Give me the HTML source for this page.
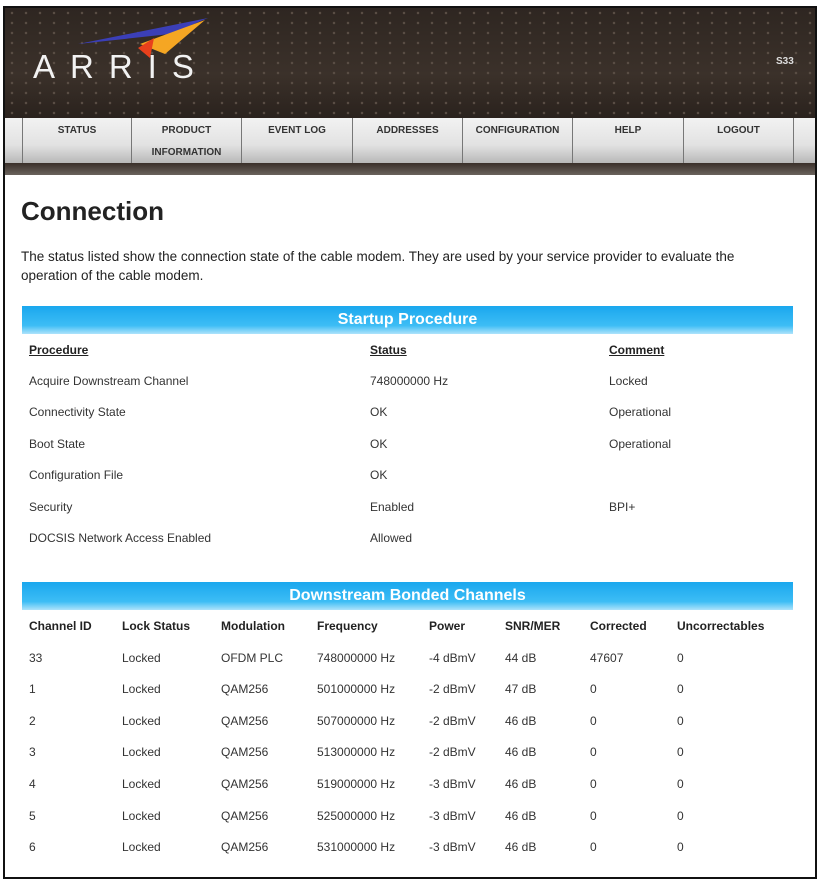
<!DOCTYPE html>
<html><head><style>
body{margin:0;width:821px;height:882px;background:#fff;position:relative;font-family:"Liberation Sans",sans-serif;overflow:hidden}
.frame{position:absolute;left:3px;top:6px;width:810px;height:869px;border:2px solid #111;}
.hdr{position:absolute;left:5px;top:8px;width:810px;height:110px;
background-image:radial-gradient(circle,#5a4e45 1px,transparent 1.5px),linear-gradient(#2e2621,#3b312a 60%,#2a221d);background-size:14px 10px,100% 100%;}
.nav{position:absolute;left:5px;top:118px;width:810px;height:45px;background:linear-gradient(#f2f2f2,#e2e2e2 60%,#b8b8b8);}
.strip{position:absolute;left:5px;top:163px;width:810px;height:12px;background:linear-gradient(#3a302a,#6a625c);}
.nb{position:absolute;top:118px;height:45px;border-left:1px solid #777;font-size:10px;font-weight:bold;color:#333;text-align:center;line-height:11px;padding-top:7px;box-sizing:border-box}
.t{position:absolute;font-size:12px;color:#333;white-space:nowrap}
.b{font-weight:bold;color:#222}
.u{text-decoration:underline}
.bar{position:absolute;left:22px;width:771px;height:28px;background:linear-gradient(#1aa7ee,#3dbdf5 70%,#aee3fb);color:#fff;font-weight:bold;font-size:16px;text-align:center;line-height:28px}
</style></head><body>
<div class="hdr"></div>
<svg style="position:absolute;left:70px;top:14px" width="150" height="50"><path d="M8 30 L138 4 L100 20 Z" fill="#3b3fb8"/><path d="M70 30 L135 6 L95 40 Z" fill="#f5a623"/><path d="M68 34 L84 24 L80 44 Z" fill="#e8401c"/></svg>
<div style="position:absolute;left:33px;top:48px;color:#f2f2f2;font-size:33px;letter-spacing:15px;font-family:'Liberation Sans',sans-serif">ARRIS</div>
<div style="position:absolute;left:776px;top:56px;color:#ddd;font-size:10px;font-weight:bold">S33</div>
<div class="nav"></div>
<div class="nb" style="left:22px;width:109px">STATUS</div>
<div class="nb" style="left:131px;width:110px;line-height:22px;padding-top:2px">PRODUCT<br>INFORMATION</div>
<div class="nb" style="left:241px;width:111px">EVENT LOG</div>
<div class="nb" style="left:352px;width:110px">ADDRESSES</div>
<div class="nb" style="left:462px;width:110px">CONFIGURATION</div>
<div class="nb" style="left:572px;width:111px">HELP</div>
<div class="nb" style="left:683px;width:110px">LOGOUT</div>
<div class="nb" style="left:793px;width:22px"></div>
<div class="strip"></div>
<div class="frame"></div>
<div class="t b" style="left:21px;top:196px;font-size:26px">Connection</div>
<div class="t" style="left:21px;top:247px;font-size:13.5px;line-height:19px;white-space:normal;width:770px;color:#222">The status listed show the connection state of the cable modem. They are used by your service provider to evaluate the operation of the cable modem.</div>
<div class="bar" style="top:306px">Startup Procedure</div>
<div class="t b u" style="left:29px;top:343px">Procedure</div><div class="t b u" style="left:370px;top:343px">Status</div><div class="t b u" style="left:609px;top:343px">Comment</div>
<div class="t" style="left:29px;top:374px">Acquire Downstream Channel</div><div class="t" style="left:370px;top:374px">748000000 Hz</div><div class="t" style="left:609px;top:374px">Locked</div>
<div class="t" style="left:29px;top:405px">Connectivity State</div><div class="t" style="left:370px;top:405px">OK</div><div class="t" style="left:609px;top:405px">Operational</div>
<div class="t" style="left:29px;top:437px">Boot State</div><div class="t" style="left:370px;top:437px">OK</div><div class="t" style="left:609px;top:437px">Operational</div>
<div class="t" style="left:29px;top:468px">Configuration File</div><div class="t" style="left:370px;top:468px">OK</div>
<div class="t" style="left:29px;top:500px">Security</div><div class="t" style="left:370px;top:500px">Enabled</div><div class="t" style="left:609px;top:500px">BPI+</div>
<div class="t" style="left:29px;top:531px">DOCSIS Network Access Enabled</div><div class="t" style="left:370px;top:531px">Allowed</div>
<div class="bar" style="top:582px">Downstream Bonded Channels</div>
<div id="ds"></div>
<script>
var xs=[29,122,221,317,429,505,590,677];
var rows=[["Channel ID","Lock Status","Modulation","Frequency","Power","SNR/MER","Corrected","Uncorrectables"],
["33","Locked","OFDM PLC","748000000 Hz","-4 dBmV","44 dB","47607","0"],
["1","Locked","QAM256","501000000 Hz","-2 dBmV","47 dB","0","0"],
["2","Locked","QAM256","507000000 Hz","-2 dBmV","46 dB","0","0"],
["3","Locked","QAM256","513000000 Hz","-2 dBmV","46 dB","0","0"],
["4","Locked","QAM256","519000000 Hz","-3 dBmV","46 dB","0","0"],
["5","Locked","QAM256","525000000 Hz","-3 dBmV","46 dB","0","0"],
["6","Locked","QAM256","531000000 Hz","-3 dBmV","46 dB","0","0"]];
var h="";rows.forEach(function(r,i){r.forEach(function(c,j){h+='<div class="t'+(i==0?' b':'')+'" style="left:'+xs[j]+'px;top:'+(619+i*31.6)+'px">'+c+'</div>';});});
document.getElementById("ds").innerHTML=h;
</script>
</body></html>
